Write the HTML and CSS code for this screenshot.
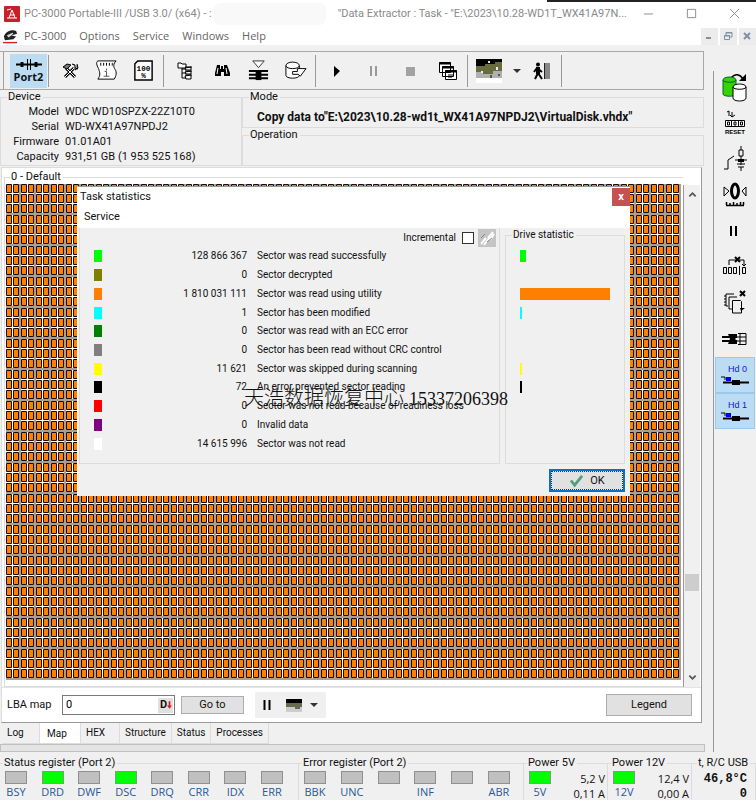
FILE: index.html
```html
<!DOCTYPE html>
<html lang="en">

<head>
  <meta charset="UTF-8" />
  <meta name="viewport" content="width=device-width, initial-scale=1.0" />
  <title>PC-3000 Portable-III - Data Extractor</title>
  <link rel="stylesheet" href="styles.css">
</head>

<body>
  <!-- Title bar -->
  <header class="title-bar">
    <svg class="app-icon" viewBox="0 0 16 16"><rect width="16" height="16" rx="1" fill="#c8202a"/><path d="M3 12h10M5 12l3-8 3 8M3 4l4-1M6 9h5" stroke="#fff" fill="none"/></svg>
    <span class="title-text">PC-3000 Portable-III /USB 3.0/ (x64) - :</span>
    <span class="title-blank"></span>
    <span class="title-text title-task">"Data Extractor : Task - "E:\2023\10.28-WD1T_WX41A97N...</span>
    <div class="window-buttons">
      <button aria-label="Minimize"><svg viewBox="0 0 12 12"><path d="M1 6.500h10"/></svg></button>
      <button aria-label="Maximize"><svg viewBox="0 0 12 12"><path d="M1.500 1.500h9v9h-9z"/></svg></button>
      <button aria-label="Close"><svg viewBox="0 0 12 12"><path d="M1 1l10 10M11 1L1 11"/></svg></button>
    </div>
  </header>

  <!-- Menu -->
  <nav class="menu-bar">
    <svg class="menu-icon" viewBox="0 0 16 16"><path d="M1 8c1-5 8-8 13-6l1 3-6 2 5 1-3 3-9 1z" fill="#222"/><path d="M4 7l6-3 1 1-5 4z" fill="#ddd"/><path d="M0 14.500h15" stroke="#d22" stroke-width="1.500"/></svg>
    <a href="#">PC-3000</a>
    <a href="#">Options</a>
    <a href="#">Service</a>
    <a href="#">Windows</a>
    <a href="#">Help</a>
    <div class="mdi-buttons">
      <button aria-label="Minimize task"><svg viewBox="0 0 10 10"><path d="M2 7h5" stroke-width="2"/></svg></button>
      <button aria-label="Restore task"><svg viewBox="0 0 10 10"><path d="M3 4V1.500h6V6H7M1.500 4.500h5v4h-5zM3 2h6M1 5h6"/></svg></button>
      <button aria-label="Close task"><svg viewBox="0 0 10 10"><path d="M2 2l6 6M8 2L2 8" stroke-width="2"/></svg></button>
    </div>
  </nav>

  <div class="workspace">
    <main class="main">
      <!-- Toolbar -->
      <div class="toolbar">
        <button class="tool port active" aria-label="Port 2">
          <svg viewBox="0 0 28 12"><path d="M1 5.500h26" stroke="#000" stroke-width="2"/><path d="M7 3v5M21 3v5" stroke="#000" stroke-width="3"/><path d="M12.500 0v11M15.500 0v11" stroke="#000"/></svg>
          <span>Port2</span>
        </button>
        <i class="sep"></i>
        <button class="tool" aria-label="Tools"><svg viewBox="0 0 20 20"><path d="M6 7l9 9M14 7l-9 9" stroke="#000" stroke-width="3"/><path d="M6 7l9 9M14 7l-9 9" stroke="#fff"/><path d="M3 6l4-3 4 1-4 4zM12 3l3 1v3l3 1M17 3l1 4-3 2" stroke="#000" fill="#777"/></svg></button>
        <button class="tool" aria-label="Script"><svg viewBox="0 0 24 24"><path d="M3 2h19c-3 3-3 6-1 9s1 7-1 10H3c3-4 2-7 1-10S0 4 3 2z" fill="#fff" stroke="#000"/><path d="M6 4v3M9 4v3M12 4v3M15 4v3M18 4v3" stroke="#000"/><path d="M12 10v2M10 13h2v5M9 18h6" stroke="#555" fill="none"/></svg></button>
        <button class="tool" aria-label="Report 100%"><svg viewBox="0 0 24 24"><path d="M6 2h15v20H3V5z" fill="#fff" stroke="#000" stroke-width="1.500"/><text x="12" y="12" class="icon-num">100</text><text x="12" y="20" class="icon-num">%</text></svg></button>
        <i class="sep"></i>
        <button class="tool" aria-label="Object tree"><svg viewBox="0 0 20 20"><path d="M3 2h3l1 1h4v4H3zM10 7l6-1v3h-5zM10 11l6-1v3h-5zM10 15l6-1v4h-5z" fill="#fff" stroke="#000"/><path d="M7 7v10h4M7 12h4M7 8h4" fill="none" stroke="#000"/><path d="M10 6h7M10 10h7M10 14h7" stroke="#000"/></svg></button>
        <button class="tool" aria-label="Find"><svg viewBox="0 0 20 20"><path d="M5 4h3v4h1V5h2v3h1V4h3l3 8v3h-6v-4H9v4H3v-3z" fill="#000"/><path d="M6 7l-1 6M14 7l1 6" stroke="#fff"/></svg></button>
        <button class="tool" aria-label="Write map"><svg viewBox="0 0 24 24"><path d="M6 2h12l-6 7z" fill="#fff" stroke="#333"/><path d="M2 12.500h20M2 16.500h20M2 20h20" stroke="#000" stroke-width="2"/><path d="M9 12h6v10H9z"/></svg></button>
        <button class="tool" aria-label="Copy disk"><svg viewBox="0 0 24 24"><path d="M2 7c0-5 14-5 14 0v10c0 4-14 4-14 0z" fill="#fff" stroke="#000"/><path d="M2 7c0 4 14 4 14 0" fill="none" stroke="#000"/><path d="M9 13h5v-3h9l-6 8-2-2H9z" fill="#fff" stroke="#000"/></svg></button>
        <i class="sep"></i>
        <button class="tool" aria-label="Start"><svg viewBox="0 0 20 20"><path d="M7 5l6 5-6 6z" fill="#000"/></svg></button>
        <button class="tool" aria-label="Pause"><svg viewBox="0 0 20 20"><path d="M7 5v10M12 5v10" stroke="#999" stroke-width="2"/></svg></button>
        <button class="tool" aria-label="Stop"><svg viewBox="0 0 20 20"><path d="M5 6h9v9H5z" fill="#a2a2a2"/></svg></button>
        <button class="tool" aria-label="Windows"><svg viewBox="0 0 20 20"><path d="M1.500 1.500h11v10h-11zM4.500 5.500h11v10h-11zM7.500 9.500h11v9h-11z" fill="#fff" stroke="#000"/><path d="M1 2.500h12M4 6.500h12M7 10.500h12" stroke="#000" stroke-width="2"/><path d="M10 14h6M10 16h4" stroke="#000"/></svg></button>
        <i class="sep"></i>
        <button class="tool" aria-label="Map view"><svg class="map-picture" viewBox="0 0 26 24"><rect width="26" height="24" fill="#fff"/><path d="M0 0h26v9H0z" fill="#000"/><path d="M0 7h9V5h10V3h7v9h-9v3H7v-2H0z" fill="#686b3e"/><path d="M0 13h7v2h10v-3h9v7H0z" fill="#aeb1ae"/><path d="M12 2h2v2h-2zM5 12h2v2H5zM20 8h2v3h-2z" fill="#eee"/><path d="M14 16h2v3h-2zM22 15h2v2h-2z" fill="#555"/></svg></button>
        <button class="tool-arrow" aria-label="Map view options"><i class="caret"></i></button>
        <button class="tool" aria-label="Exit"><svg viewBox="0 0 20 20"><circle cx="6" cy="3.500" r="2"/><path d="M6 6v6l-3 6M6 12l4 6M2 11l3-4 5 4" stroke="#000" stroke-width="2" fill="none"/><path d="M4 6h4v7H4z"/><path d="M12 2h6v16h-6z" fill="#888"/><path d="M12.500 2v16" stroke="#222"/></svg></button>
        <i class="sep"></i>
      </div>

      <!-- Device and task info -->
      <div class="info">
        <fieldset class="group device">
          <legend>Device</legend>
          <dl>
            <dt>Model</dt><dd>WDC WD10SPZX-22Z10T0</dd>
            <dt>Serial</dt><dd>WD-WX41A97NPDJ2</dd>
            <dt>Firmware</dt><dd>01.01A01</dd>
            <dt>Capacity</dt><dd>931,51 GB (1 953 525 168)</dd>
          </dl>
        </fieldset>
        <div class="task-info">
          <fieldset class="group">
            <legend>Mode</legend>
            <p class="mode-text">Copy data to"E:\2023\10.28-wd1t_WX41A97NPDJ2\VirtualDisk.vhdx"</p>
          </fieldset>
          <fieldset class="group">
            <legend>Operation</legend>
          </fieldset>
        </div>
      </div>

      <!-- Map page -->
      <section class="page">
        <div class="map-row">
          <fieldset class="group map-group">
            <legend>0 - Default</legend>
            <svg class="map-cells" viewBox="0 0 675 496" preserveAspectRatio="none">
              <defs>
                <!-- two by three cells, gaps alternate white and grey -->
                <pattern id="cells" width="15" height="31" patternUnits="userSpaceOnUse">
                  <rect width="15" height="31" fill="#fff"/>
                  <path d="M13 0h2v31h-2zM0 29h15v2H0z" fill="#a8a096"/>
                  <path d="M0.500 0.500h5v8h-5zM7.500 0.500h5v8h-5zM0.500 10.500h5v8h-5zM7.500 10.500h5v8h-5zM0.500 20.500h5v8h-5zM7.500 20.500h5v8h-5z" fill="#ff8000" stroke="#1a0d00"/>
                </pattern>
              </defs>
              <rect width="675" height="496" fill="url(#cells)"/>
            </svg>
          </fieldset>
          <div class="scrollbar">
            <svg viewBox="0 0 10 10"><path d="M1.500 7L5 3.500 8.500 7"/></svg>
            <i class="thumb"></i>
            <svg viewBox="0 0 10 10"><path d="M1.500 3L5 6.500 8.500 3"/></svg>
          </div>

          <!-- Task statistics dialog -->
          <div class="dialog" role="dialog" aria-labelledby="dialog-title">
            <div class="dialog-title">
              <span id="dialog-title">Task statistics</span>
              <button class="dialog-close" aria-label="Close dialog">x</button>
            </div>
            <nav class="dialog-menu"><a href="#">Service</a></nav>
            <div class="dialog-body">
              <div class="stats">
                <div class="incremental">
                  <label for="incremental">Incremental</label>
                  <input type="checkbox" id="incremental">
                  <button class="clear-btn" aria-label="Clear" disabled><svg viewBox="0 0 16 16"><path d="M2 14l5-6M5 15l6-8M9 8l5-6M11 10l4-6" stroke="#fff" stroke-width="2"/><path d="M2 8l4-4M8 12l5-4" stroke="#888"/></svg></button>
                </div>
                <table>
                  <tr><td><i class="swatch read"></i></td><td>128 866 367</td><td>Sector was read successfully</td></tr>
                  <tr><td><i class="swatch decrypted"></i></td><td>0</td><td>Sector decrypted</td></tr>
                  <tr><td><i class="swatch utility"></i></td><td>1 810 031 111</td><td>Sector was read using utility</td></tr>
                  <tr><td><i class="swatch modified"></i></td><td>1</td><td>Sector has been modified</td></tr>
                  <tr><td><i class="swatch ecc"></i></td><td>0</td><td>Sector was read with an ECC error</td></tr>
                  <tr><td><i class="swatch crc"></i></td><td>0</td><td>Sector has been read without CRC control</td></tr>
                  <tr><td><i class="swatch skipped"></i></td><td>11 621</td><td>Sector was skipped during scanning</td></tr>
                  <tr><td><i class="swatch error"></i></td><td>72</td><td>An error prevented sector reading</td></tr>
                  <tr><td><i class="swatch readiness"></i></td><td>0</td><td>Sector was not read because of readiness loss</td></tr>
                  <tr><td><i class="swatch invalid"></i></td><td>0</td><td>Invalid data</td></tr>
                  <tr><td><i class="swatch unread"></i></td><td>14 615 996</td><td>Sector was not read</td></tr>
                </table>
              </div>
              <fieldset class="group drive-stat">
                <legend>Drive statistic</legend>
                <div class="bars">
                  <i class="bar read" style="width: 7%"></i>
                  <i class="bar" style="width: 0%"></i>
                  <i class="bar utility" style="width: 100%"></i>
                  <i class="bar modified" style="width: 2%"></i>
                  <i class="bar" style="width: 0%"></i>
                  <i class="bar" style="width: 0%"></i>
                  <i class="bar skipped" style="width: 2%"></i>
                  <i class="bar error" style="width: 2%"></i>
                  <i class="bar" style="width: 0%"></i>
                  <i class="bar" style="width: 0%"></i>
                  <i class="bar" style="width: 0%"></i>
                </div>
              </fieldset>
            </div>
            <div class="dialog-footer">
              <button class="ok-btn"><svg viewBox="0 0 16 14"><path d="M2 7l4 5L14 2" fill="none" stroke="#4fa07c" stroke-width="3"/></svg>OK</button>
            </div>
          </div>
          <div class="watermark" lang="zh">天浩数据恢复中心 <span>15337206398</span></div>
        </div>

        <div class="lba-bar">
          <label for="lba">LBA map</label>
          <div class="lba-field">
            <input type="text" id="lba" value="0">
            <button class="radix" aria-label="Decimal">D<svg viewBox="0 0 6 10"><path d="M2 0h2v5h2L3 9 0 5h2z" fill="#e11"/></svg></button>
          </div>
          <button class="btn goto">Go to</button>
          <div class="mini-tools">
            <button aria-label="Pause map"><svg viewBox="0 0 10 12"><path d="M2.500 1v10M7.500 1v10" stroke="#000" stroke-width="2"/></svg></button>
            <button aria-label="Map mode"><svg class="mini-picture" viewBox="0 0 16 13"><path d="M0 0h16v13H0z" fill="#ccc"/><path d="M0 0h16v4H0z"/><path d="M0 4h16v4H0z" fill="#686b4e"/><path d="M9 8h5v2H9z" fill="#666"/></svg></button>
            <button aria-label="Map mode options"><i class="caret"></i></button>
          </div>
          <button class="btn legend-btn">Legend</button>
        </div>
      </section>

      <!-- Page tabs -->
      <nav class="tabs">
        <a href="#">Log</a>
        <a href="#" class="active">Map</a>
        <a href="#">HEX</a>
        <a href="#">Structure</a>
        <a href="#">Status</a>
        <a href="#">Processes</a>
      </nav>
      <div class="progress"></div>
    </main>

    <!-- Right toolbar -->
    <aside class="sidebar">
      <button aria-label="Copy disk"><svg viewBox="0 0 26 30"><path d="M9 5c4-5 9-4 12 1" fill="none" stroke="#000" stroke-width="1.500"/><path d="M24 1v7h-7z"/><path d="M1 7c0-4 13-4 13 0v14c0 3-13 3-13 0z" fill="#35d300" stroke="#063"/><path d="M1 7c0 3 13 3 13 0" fill="none" stroke="#063"/><path d="M11 14c0-4 13-4 13 0v11c0 4-13 4-13 0z" fill="#fff" stroke="#000"/><path d="M11 14c0 3 13 3 13 0" fill="none" stroke="#000"/></svg></button>
      <button aria-label="Reset"><svg viewBox="0 0 26 30"><path d="M5 4l2-1v5M10 4v5M8 7l2 2 3-2" fill="none" stroke="#000"/><path d="M3.500 12.500h19v6h-19zM9.500 12v7M16.500 12v7" fill="#fff" stroke="#000"/><path d="M5.500 14v3h2v-3zM12 14v3h2v-3zM18.500 14v3h2v-3z" fill="none" stroke="#000"/><text x="13" y="26" class="icon-reset">RESET</text></svg></button>
      <button aria-label="Power switch"><svg viewBox="0 0 26 30"><path d="M2 25h4V16l6-4M13 16h12M19 2v4M17 6h4v6h-4zM19 12v9M15 20h8M16 23h6M19 23v4" fill="none" stroke="#000"/><path d="M16 15h6v3h-6z"/></svg></button>
      <button aria-label="Recalibrate"><svg viewBox="0 0 26 30"><path d="M2 7v9l5-5zM24 7v9l-4-5z" fill="none" stroke="#000"/><ellipse cx="13" cy="11" rx="3.500" ry="7" fill="none" stroke="#000" stroke-width="3"/><path d="M4 25.500h18M4.500 22v3M8 23v2M11.500 22v3M15 23v2M18.500 22v3M21.500 22v3" stroke="#000" stroke-width="1.500"/></svg></button>
      <button aria-label="Pause"><svg viewBox="0 0 26 30"><path d="M9 10v10M14 10v10" stroke="#000" stroke-width="2"/></svg></button>
      <button aria-label="Skip"><svg viewBox="0 0 26 30"><path d="M7 13V8h15v6M20 12l2 2 2-2" fill="none" stroke="#000"/><path d="M13 5l5 5M18 5l-5 5" stroke="#000" stroke-width="2"/><path d="M1.500 15.500h3v6h-3zM6.500 15.500h3v6h-3zM11.500 15.500h3v6h-3zM20.500 15.500h3v6h-3zM17.500 14v9" fill="none" stroke="#000"/></svg></button>
      <button aria-label="Clear copies"><svg viewBox="0 0 26 30"><path d="M18 3l5 5M23 3l-5 5" stroke="#000" stroke-width="2"/><path d="M12 6H4v12h2M15 9H7v12h3M10.500 12.500h8l1 1V25h-9z" fill="none" stroke="#000"/><path d="M2 8h2M2 11h2M2 14h2M2 17h2" stroke="#000"/><path d="M18 20h5l-4 3z"/></svg></button>
      <button aria-label="Heads"><svg viewBox="0 0 26 30"><path d="M0 13h15M0 17h15" stroke="#000" stroke-width="2"/><path d="M6 10h9v3l-2 2 2 2v3H6l2-5z"/><path d="M15 13h9M15 17h9M16 9.500h8v11h-8M18 9v12" fill="none" stroke="#000"/></svg></button>
      <button class="head"><span>Hd 0</span><svg viewBox="0 0 28 12"><path d="M0 2h4v3" fill="none" stroke="#000"/><path d="M5 2h5v4H5z" fill="#00f"/><path d="M2 7.500h26" stroke="#000" stroke-width="2"/><path d="M11 5h8v5h-8z"/></svg></button>
      <button class="head"><span>Hd 1</span><svg viewBox="0 0 28 12"><path d="M0 2h4v3" fill="none" stroke="#000"/><path d="M5 2h5v4H5z" fill="#00f"/><path d="M2 7.500h26" stroke="#000" stroke-width="2"/><path d="M11 5h8v5h-8z"/></svg></button>
    </aside>
  </div>

  <!-- Status registers -->
  <footer class="status">
    <fieldset class="group register status-reg">
      <legend>Status register (Port 2)</legend>
      <div class="leds">
        <span class="led">BSY</span>
        <span class="led on">DRD</span>
        <span class="led">DWF</span>
        <span class="led on">DSC</span>
        <span class="led">DRQ</span>
        <span class="led">CRR</span>
        <span class="led">IDX</span>
        <span class="led">ERR</span>
      </div>
    </fieldset>
    <fieldset class="group register error-reg">
      <legend>Error register (Port 2)</legend>
      <div class="leds">
        <span class="led">BBK</span>
        <span class="led">UNC</span>
        <span class="led"></span>
        <span class="led">INF</span>
        <span class="led"></span>
        <span class="led">ABR</span>
      </div>
    </fieldset>
    <fieldset class="group register power">
      <legend>Power 5V</legend>
      <div class="power-row">
        <span class="led on">5V</span>
        <div class="values"><div>5,2 V</div><div>0,11 A</div></div>
      </div>
    </fieldset>
    <fieldset class="group register power">
      <legend>Power 12V</legend>
      <div class="power-row">
        <span class="led on">12V</span>
        <div class="values"><div>12,4 V</div><div>0,00 A</div></div>
      </div>
    </fieldset>
    <fieldset class="group register temp">
      <legend>t, R/C USB</legend>
      <div class="temp-values"><div>46,8°C</div><div>0</div></div>
    </fieldset>
  </footer>
</body>

</html>
```
FILE: styles.css
```css
/* Base Styles */
* {
  box-sizing: border-box;
  margin: 0;
  padding: 0;
}

body {
  font-family: Roboto, 'Liberation Sans', sans-serif;
  font-size: 11px;
  line-height: 14px;
  color: #111;
  background-color: #f0f0f0;
  min-height: 100vh;
  display: flex;
  flex-direction: column;
}

button {
  font: inherit;
  color: inherit;
  background: none;
  border: none;
}

a {
  color: inherit;
  text-decoration: none;
}

i {
  display: block;
}

svg {
  display: block;
  flex: none;
}

/* Title bar */
.title-bar {
  position: relative;
  height: 27px;
  display: flex;
  align-items: center;
  padding-left: 4px;
  background-color: #fff;
  color: #8a8a8a;
  white-space: nowrap;
}

.title-bar::before {
  content: "";
  position: absolute;
  top: 0;
  right: 0;
  width: 209px;
  height: 2px;
  background-color: #222;
}

.app-icon {
  width: 16px;
  height: 16px;
  margin-right: 4px;
}

.title-blank {
  width: 112px;
  height: 22px;
  margin: 0 12px 0 2px;
  border-radius: 6px;
  background-color: #f9f9f9;
}

.window-buttons {
  display: flex;
  margin-left: auto;
  gap: 16px;
  padding-right: 8px;
}

.window-buttons button {
  width: 27px;
  height: 20px;
  padding: 4px 8px;
}

.window-buttons svg {
  width: 11px;
  height: 11px;
  fill: none;
  stroke: #888;
}

/* Menu */
.menu-bar {
  display: flex;
  align-items: center;
  height: 18px;
  gap: 13px;
  padding-left: 3px;
  background-color: #fff;
  color: #666;
  font-family: 'Open Sans', sans-serif;
}

.menu-icon {
  width: 15px;
  height: 15px;
  margin-right: -7px;
}

.mdi-buttons {
  display: flex;
  gap: 2px;
  margin-left: auto;
}

.mdi-buttons button {
  width: 17px;
  height: 17px;
  padding: 3px;
  background-color: #ececec;
}

.mdi-buttons svg {
  width: 10px;
  height: 10px;
  fill: none;
  stroke: #7e91a5;
}

/* Workspace */
.workspace {
  flex: 1;
  display: flex;
}

.main {
  flex: 1;
  min-width: 0;
  padding: 6px 9px 0 0;
  display: flex;
  flex-direction: column;
}

/* Toolbar */
.toolbar {
  display: flex;
  align-items: center;
  height: 39px;
  padding-left: 10px;
  border: 1px solid #a8a8a8;
  border-left: none;
  box-shadow: inset 3px 0 #f0f0f0, inset 4px 0 #a0a0a0;
}

.tool {
  width: 37px;
  height: 34px;
  display: flex;
  align-items: center;
  justify-content: center;
}

.tool svg {
  width: 20px;
  height: 20px;
}

.tool svg[viewBox="0 0 24 24"] {
  width: 23px;
  height: 23px;
}

.tool .map-picture {
  width: 26px;
  height: 24px;
}

.port {
  flex-direction: column;
  background-color: #bcdcf4;
}

.tool svg[viewBox="0 0 28 12"] {
  height: 12px;
  width: 28px;
}

.port span {
  font-family: 'Open Sans', sans-serif;
  font-weight: bold;
  line-height: 12px;
}

.tool-arrow {
  width: 16px;
  height: 34px;
  padding-left: 6px;
}

.caret {
  width: 7px;
  border: 4px solid transparent;
  border-top-color: #333;
  border-bottom: none;
}

.sep {
  width: 1px;
  height: 32px;
  margin: 0 2px 0 1px;
  background-color: #999;
}

.icon-num {
  font: bold 8px 'Liberation Mono', monospace;
  text-anchor: middle;
}

.icon-reset {
  font: bold 6px 'Liberation Sans', sans-serif;
  text-anchor: middle;
}

/* Group boxes */
.group {
  min-width: 0;
  border: 1px solid #dcdcdc;
}

.group legend {
  margin-left: 6px;
  padding: 0 2px 0 1px;
  line-height: 14px;
}

.info {
  display: flex;
  height: 76px;
}

.device {
  width: 242px;
}

.device dl {
  display: grid;
  grid-template-columns: 58px 1fr;
  column-gap: 6px;
  line-height: 15px;
}

.device dt {
  text-align: right;
}

.task-info {
  flex: 1;
  display: flex;
  flex-direction: column;
}

.task-info .group {
  flex: 1;
}

.mode-text {
  padding: 6px 0 0 14px;
  font-size: 12px;
  font-weight: bold;
  white-space: nowrap;
}

/* Map page */
.page {
  flex: 1;
  display: flex;
  flex-direction: column;
  margin: 1px 2px 0 1px;
  background-color: #fff;
  border: 1px solid #dcdcdc;
  border-right-color: #999;
  border-bottom-color: #999;
}

.map-row {
  position: relative;
  flex: 1;
  display: flex;
  padding: 2px 1px 0 2px;
}

.map-group {
  flex: 1;
  display: flex;
  flex-direction: column;
  padding: 0 2px 6px 1px;
  border-right: none;
}

.map-group legend {
  margin-left: 4px;
}

.map-cells {
  width: 100%;
  height: 496px;
  flex: 1;
}

.scrollbar {
  width: 17px;
  margin-top: 15px;
  padding: 5px 1px;
  display: flex;
  flex-direction: column;
  align-items: center;
  background-color: #f0f0f0;
  border-left: 1px solid #999;
}

.scrollbar svg {
  width: 9px;
  height: 9px;
  fill: none;
  stroke: #555;
  stroke-width: 2;
}

.thumb {
  width: 14px;
  height: 17px;
  margin: auto 0 82px;
  background-color: #cdcdcd;
}

/* Dialog */
.dialog {
  position: absolute;
  top: 18px;
  left: 75px;
  right: 71px;
  background-color: #f0f0f0;
  border-top: 1px solid #999;
  border-left: 1px solid #fff;
}

.dialog-title {
  display: flex;
  justify-content: space-between;
  align-items: center;
  height: 19px;
  padding-left: 2px;
  background-color: #fff;
}

.dialog-close {
  width: 18px;
  height: 18px;
  background-color: #c75050;
  color: #fff;
  font-weight: bold;
}

.dialog-menu {
  height: 22px;
  padding: 4px 6px;
  background-color: #fff;
}

.dialog-body {
  display: flex;
  gap: 5px;
  padding: 0 5px 0 1px;
  font-size: 10px;
}

.stats {
  flex: 1;
  border: 1px solid #dcdcdc;
  border-top: none;
}

.incremental {
  display: flex;
  justify-content: flex-end;
  align-items: center;
  gap: 6px;
  height: 19px;
  padding-right: 3px;
}

.incremental input {
  appearance: none;
  width: 12px;
  height: 12px;
  border: 1px solid #333;
  background-color: #fff;
}

.clear-btn {
  width: 18px;
  height: 18px;
  padding: 1px;
  margin-left: -2px;
  background-color: #c4c4c4;
}

.stats table {
  width: 100%;
  height: 206px;
  margin-bottom: 10px;
  border-collapse: collapse;
}

.stats td:nth-child(1) {
  width: 24px;
  padding-left: 14px;
}

.stats td:nth-child(2) {
  width: 143px;
  text-align: right;
}

.stats td:nth-child(3) {
  padding-left: 10px;
}

.swatch {
  width: 8px;
  height: 12px;
}

.read { background-color: #00ff00; }
.decrypted { background-color: #808000; }
.utility { background-color: #ff8000; }
.modified { background-color: #00ffff; }
.ecc { background-color: #008000; }
.crc { background-color: #808080; }
.skipped { background-color: #ffff00; }
.error { background-color: #000; }
.readiness { background-color: #ff0000; }
.invalid { background-color: #800080; }
.unread { background-color: #fff; }

.drive-stat {
  width: 120px;
}

.bars {
  display: grid;
  grid-template-rows: repeat(11, 1fr);
  align-items: center;
  height: 206px;
  margin: 5px 14px 0;
}

.bar {
  height: 12px;
}

.dialog-footer {
  display: flex;
  justify-content: flex-end;
  padding: 5px 5px 4px;
}

.ok-btn {
  display: flex;
  align-items: center;
  justify-content: center;
  gap: 6px;
  width: 76px;
  height: 23px;
  background-color: #e1e1e1;
  border: 2px solid #0f6fc0;
  outline: 1px dotted #333;
  outline-offset: -3px;
}

.ok-btn svg {
  width: 15px;
  height: 13px;
}

.watermark {
  position: absolute;
  top: 217px;
  left: 242px;
  font-family: 'Liberation Serif', 'Noto Sans CJK SC', serif;
  font-size: 20px;
  font-weight: 300;
  line-height: 26px;
  white-space: nowrap;
}

.watermark span {
  font-size: 18px;
}

/* LBA toolbar */
.lba-bar {
  display: flex;
  align-items: center;
  height: 35px;
  padding: 0 9px 0 5px;
  border-top: 1px solid #e4e4e4;
}

.lba-bar label {
  width: 55px;
}

.lba-field {
  display: flex;
  align-items: center;
  width: 113px;
  height: 20px;
  margin-right: 6px;
  padding-right: 1px;
  border: 1px solid #7a7a7a;
}

.lba-field input {
  flex: 1;
  min-width: 0;
  padding-left: 3px;
  font: inherit;
  border: none;
  outline: none;
}

.radix {
  display: flex;
  align-items: center;
  width: 15px;
  height: 15px;
  padding-left: 2px;
  background-color: #e0e0e0;
  font-weight: bold;
}

.radix svg {
  width: 5px;
  height: 9px;
}

.btn {
  background-color: #e1e1e1;
  border: 1px solid #adadad;
}

.goto {
  width: 63px;
  height: 18px;
}

.legend-btn {
  width: 86px;
  height: 22px;
  margin-left: auto;
}

.mini-tools {
  display: flex;
  align-items: center;
  gap: 14px;
  height: 26px;
  margin-left: 11px;
  padding: 0 8px 0 7px;
  background-color: #f0f0f0;
}

.mini-tools svg {
  width: 10px;
  height: 12px;
}

.mini-tools .mini-picture {
  width: 16px;
  height: 13px;
}

.mini-tools button:last-child {
  margin-left: -6px;
}

/* Tabs */
.tabs {
  display: flex;
  height: 21px;
  padding-left: 2px;
  font-size: 10px;
}

.tabs a {
  padding: 3px 5px;
  border: 1px solid #dcdcdc;
  border-top: none;
  border-left: none;
}

.tabs a:first-child {
  width: 38px;
}

.tabs .active {
  width: 41px;
  padding: 4px 7px;
  background-color: #fff;
}

.tabs a:nth-child(3) {
  width: 39px;
}

.progress {
  height: 8px;
  margin-right: -1px;
  background-color: #e4e4e4;
  border: 1px solid #c0c0c0;
}

/* Sidebar */
.sidebar {
  width: 43px;
  margin-top: 26px;
  border-left: 1px solid #999;
  display: flex;
  flex-direction: column;
  align-items: center;
}

.sidebar button {
  width: 40px;
  height: 36px;
  display: flex;
  flex-direction: column;
  align-items: center;
  justify-content: center;
}

.sidebar button:first-child {
  height: 34px;
}

.sidebar svg {
  width: 26px;
  height: 30px;
}

.sidebar .head {
  background-color: #bcdcf4;
  border: 1px solid #9cc8ec;
}

.head span {
  align-self: flex-end;
  padding-right: 7px;
  color: #1414e0;
  font-family: 'Liberation Sans', sans-serif;
  font-size: 9px;
  line-height: 11px;
}

.sidebar .head svg {
  width: 28px;
  height: 12px;
}

/* Status */
.status {
  display: grid;
  grid-template-columns: 299fr 225fr 84fr 84fr 64fr;
  height: 45px;
  margin-top: 3px;
  font-family: 'Open Sans', sans-serif;
  overflow: hidden;
}

.register {
  border-left: none;
  border-bottom: none;
  white-space: nowrap;
}

.register legend {
  margin-left: 3px;
  line-height: 16px;
  font-family: Roboto, sans-serif;
}

.leds {
  display: flex;
  justify-content: space-between;
  padding: 0 11px 0 1px;
}

.error-reg .leds {
  padding-right: 9px;
}

.led {
  display: flex;
  flex-direction: column;
  align-items: center;
  width: 30px;
  color: #2a5699;
}

.led::before {
  content: "";
  width: 20px;
  height: 11px;
  margin-bottom: 1px;
  background-color: #c0c0c0;
  border: 1px solid #909090;
}

.led.on::before {
  background-color: #00ff00;
}

.power-row {
  display: flex;
  justify-content: space-between;
  padding: 0 2px 0 1px;
}

.values {
  text-align: right;
  line-height: 15px;
}

.temp legend {
  margin-left: 5px;
}

.temp-values {
  padding: 1px 8px 0 0;
  text-align: right;
  font: bold 12px/15px 'Liberation Mono', monospace;
}
```
